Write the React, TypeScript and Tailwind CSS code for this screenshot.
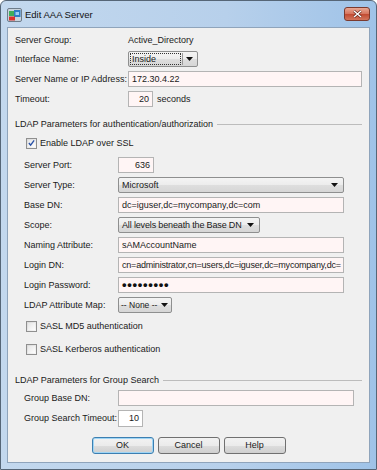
import React from "react";

function Input({ cls, value, right, pink = true, mono, tight }: { cls: string; value?: string; right?: boolean; pink?: boolean; mono?: boolean; tight?: boolean }) {
  return (
    <div
      className={`h-[16px] border border-[#b4b4b4] ${pink ? "bg-[#fff5f5]" : "bg-white"} flex items-center px-[3px] overflow-hidden whitespace-nowrap ${right ? "justify-end" : ""} ${cls}`}
    >
      {mono ? (
        <span className="text-[13px] font-bold tracking-[0.7px] leading-none text-[#111] -mt-[1px]">{value}</span>
      ) : (
        <span className={`leading-none ${tight ? "tracking-[-0.2px]" : ""}`}>{value}</span>
      )}
    </div>
  );
}

function Arrow() {
  return (
    <svg width="7" height="4" viewBox="0 0 7 4" className="shrink-0">
      <path d="M0 0 H7 L3.5 4 Z" fill="#111" />
    </svg>
  );
}

function Select({ cls, value, tight }: { cls: string; value: string; tight?: boolean }) {
  return (
    <div
      className={`h-[16px] border border-[#8e8f8f] rounded-[2px] bg-[linear-gradient(#f4f4f4_0%,#ececec_50%,#dedede_51%,#d6d6d6_100%)] flex items-center pl-[3px] pr-[5px] whitespace-nowrap ${cls}`}
    >
      <span className={`leading-none flex-1 ${tight ? "tracking-[-0.15px]" : ""}`}>{value}</span>
      <Arrow />
    </div>
  );
}

function Checkbox({ checked }: { checked?: boolean }) {
  return (
    <div className="w-[11px] h-[11px] border border-[#8f8f8f] bg-[linear-gradient(135deg,#d9d9d9,#f7f7f7)] p-[1px] shrink-0">
      <div className="w-full h-full bg-[linear-gradient(135deg,#e6e6e6,#fdfdfd)] flex items-center justify-center">
        {checked && (
          <svg width="8" height="8" viewBox="0 0 8 8">
            <path d="M1 4 L3 6.5 L7 1" stroke="#2a52a8" strokeWidth="1.6" fill="none" />
          </svg>
        )}
      </div>
    </div>
  );
}

function Row({ label, lw, children, h = "h-[20px]" }: { label: string; lw: string; children?: React.ReactNode; h?: string }) {
  return (
    <div className={`flex items-center ${h}`}>
      <div className={`${lw} shrink-0 leading-none whitespace-nowrap`}>{label}</div>
      {children}
    </div>
  );
}

function Header({ text }: { text: string }) {
  return (
    <div className="flex items-center h-[14px] pr-[7px]">
      <span className="leading-none whitespace-nowrap">{text}</span>
      <div className="flex-1 h-px bg-[#bcbcbc] ml-[4px]" />
    </div>
  );
}

function Button({ label, def }: { label: string; def?: boolean }) {
  return (
    <div
      className={`w-[62px] h-[17px] rounded-[3px] border ${def ? "border-[#3c7fb1] shadow-[inset_0_0_0_1px_#9fd5f5]" : "border-[#707070]"} bg-[linear-gradient(#f2f2f2_0%,#ebebeb_50%,#dddddd_51%,#cfcfcf_100%)] flex items-center justify-center leading-none`}
    >
      {label}
    </div>
  );
}

export default function App() {
  return (
    <div className="w-[377px] h-[470px] overflow-hidden font-['Liberation_Sans',Arial,sans-serif] text-[9px] text-[#1a1a1a]">
      <div className="w-[377px] h-[470px] border border-[#566677] rounded-t-[6px] bg-[linear-gradient(90deg,#c3d8ee,#b7d0eb_60%,#9fc3e8)] flex flex-col">
        {/* title bar */}
        <div className="h-[26px] flex items-center pl-[6px] pr-[6px] pt-[1px]">
          <svg width="15" height="14" viewBox="0 0 15 14" className="shrink-0">
            <rect x="0.5" y="0.5" width="14" height="13" rx="1.5" fill="#c9d3dc" stroke="#6d7c8a" />
            <rect x="2" y="3" width="5" height="5" fill="#3fae5a" />
            <rect x="7" y="2" width="6.5" height="7" fill="#2d7cc4" />
            <rect x="8.5" y="4" width="3.5" height="3" fill="#9ad0f5" />
            <rect x="2" y="8.5" width="6" height="4" fill="#d8322c" />
          </svg>
          <span className="ml-[3px] text-[9.5px] leading-none text-[#111]">Edit AAA Server</span>
          <div className="flex-1" />
          <div className="w-[26px] h-[14px] rounded-[3px] border border-[#7b3a2e] bg-[linear-gradient(#e9a894_0%,#d6735c_50%,#c14a31_51%,#d3765d_100%)] flex items-center justify-center -mt-[1px]">
            <svg width="9" height="8" viewBox="0 0 9 8">
              <path d="M1 1 L8 7 M8 1 L1 7" stroke="#5a1e14" strokeWidth="2.6" />
              <path d="M1 1 L8 7 M8 1 L1 7" stroke="#ffffff" strokeWidth="1.5" />
            </svg>
          </div>
        </div>

        {/* content */}
        <div className="mx-[6px] mb-[6px] flex-1 bg-[#f0f0f0] border border-[#8fa4bb] pl-[7px] pt-[3px] flex flex-col">
          <Row label="Server Group:" lw="w-[113px]" h="h-[18px]">
            <span className="leading-none">Active_Directory</span>
          </Row>
          <Row label="Interface Name:" lw="w-[113px]">
            <div className="w-[70px] h-[16px] border border-[#8e8f8f] rounded-[2px] bg-[linear-gradient(#f4f4f4_0%,#ececec_50%,#dedede_51%,#d6d6d6_100%)] flex items-center p-[1px]">
              <div className="flex-1 h-full border border-dotted border-[#333] flex items-center pl-[1px]">
                <span className="leading-none">Inside</span>
              </div>
              <div className="w-px h-full bg-[#9a9a9a] ml-[1px]" />
              <div className="w-[13px] flex items-center justify-center">
                <Arrow />
              </div>
            </div>
          </Row>
          <Row label="Server Name or IP Address:" lw="w-[113px]">
            <Input cls="w-[234px]" value="172.30.4.22" />
          </Row>
          <Row label="Timeout:" lw="w-[113px]">
            <Input cls="w-[25px]" value="20" right />
            <span className="ml-[4px] leading-none">seconds</span>
          </Row>

          <div className="mt-[8px]">
            <Header text="LDAP Parameters for authentication/authorization" />
          </div>

          <div className="ml-[11px] flex items-center h-[20px] mt-[2px]">
            <Checkbox checked />
            <span className="ml-[3px] leading-none">Enable LDAP over SSL</span>
          </div>

          <div className="ml-[9px] mt-[2px] flex flex-col">
            <Row label="Server Port:" lw="w-[94px]">
              <Input cls="w-[36px]" value="636" right />
            </Row>
            <Row label="Server Type:" lw="w-[94px]">
              <Select cls="w-[226px]" value="Microsoft" />
            </Row>
            <Row label="Base DN:" lw="w-[94px]">
              <Input cls="w-[226px]" value="dc=iguser,dc=mycompany,dc=com" />
            </Row>
            <Row label="Scope:" lw="w-[94px]">
              <Select cls="w-[142px]" value="All levels beneath the Base DN" tight />
            </Row>
            <Row label="Naming Attribute:" lw="w-[94px]">
              <Input cls="w-[226px]" value="sAMAccountName" />
            </Row>
            <Row label="Login DN:" lw="w-[94px]">
              <Input cls="w-[226px]" value="cn=administrator,cn=users,dc=iguser,dc=mycompany,dc=" tight />
            </Row>
            <Row label="Login Password:" lw="w-[94px]">
              <Input cls="w-[226px]" value="•••••••••" mono />
            </Row>
            <Row label="LDAP Attribute Map:" lw="w-[94px]">
              <div className="w-[54px] h-[16px] border border-[#8e8f8f] rounded-[2px] bg-[linear-gradient(#f4f4f4_0%,#ececec_50%,#dedede_51%,#d6d6d6_100%)] flex items-center pl-[2px] pr-[3px] whitespace-nowrap">
                <span className="leading-none flex-1 text-[8.5px]">-- None --</span>
                <Arrow />
              </div>
            </Row>
          </div>

          <div className="ml-[11px] flex items-center h-[20px] mt-[1px]">
            <Checkbox />
            <span className="ml-[3px] leading-none">SASL MD5 authentication</span>
          </div>
          <div className="ml-[11px] flex items-center h-[20px] mt-[3px]">
            <Checkbox />
            <span className="ml-[3px] leading-none">SASL Kerberos authentication</span>
          </div>

          <div className="mt-[14px]">
            <Header text="LDAP Parameters for Group Search" />
          </div>

          <div className="ml-[9px] mt-[1px] flex flex-col">
            <Row label="Group Base DN:" lw="w-[94px]">
              <Input cls="w-[236px]" value="" />
            </Row>
            <Row label="Group Search Timeout:" lw="w-[94px]" h="h-[21px]">
              <Input cls="w-[25px] h-[17px]" value="10" right pink={false} />
            </Row>
          </div>

          <div className="mt-[8px] flex justify-center gap-[4px] pr-[7px]">
            <Button label="OK" def />
            <Button label="Cancel" />
            <Button label="Help" />
          </div>
        </div>
      </div>
    </div>
  );
}
